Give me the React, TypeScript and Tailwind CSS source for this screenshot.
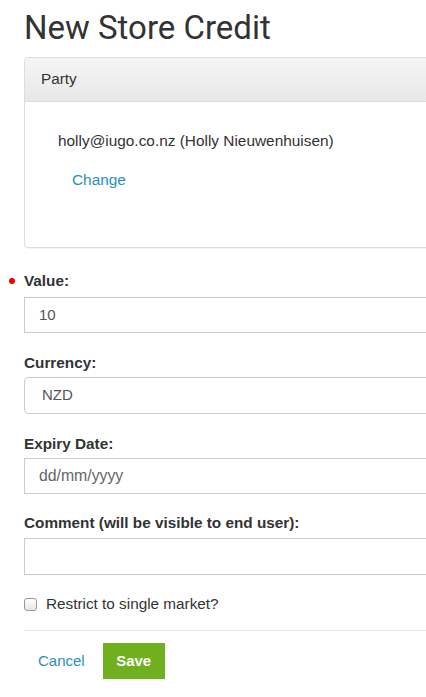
import React from "react";

export default function App() {
  return (
    <div className="w-[426px] h-[697px] overflow-hidden bg-white text-[#333] font-['Liberation_Sans',Arial,sans-serif]">
      <div className="w-[520px] pl-6">
        {/* Title */}
        <h1 className="pt-[9px] h-[57px] text-[33px] leading-[38px] font-['Roboto',sans-serif] text-[#333]">
          New Store Credit
        </h1>

        {/* Party panel */}
        <div className="h-[191px] rounded-[4px] border border-[#ddd] shadow-[0_1px_1px_rgba(0,0,0,0.05)]">
          <div className="h-[44px] flex items-center px-4 bg-gradient-to-b from-[#f5f5f5] to-[#e8e8e8] border-b border-[#ddd] rounded-t-[4px] text-[15.3px]">
            Party
          </div>
          <div className="pl-[33px] pt-[29px] text-[15.4px]">
            <div className="leading-[20px]">holly@iugo.co.nz (Holly Nieuwenhuisen)</div>
            <div className="pl-[14px] pt-[19px] leading-[20px] text-[#2a8fc0]">Change</div>
          </div>
        </div>

        {/* Fields */}
        <div className="pt-[23px] text-[15.3px]">
          <div className="relative h-[20px] flex items-center font-bold">
            <span className="absolute -left-[15px] top-[7px] w-[6px] h-[6px] rounded-full bg-[#e00]" />
            Value:
          </div>
          <div className="mt-[6px] h-[36px] border border-[#ccc] flex items-center pl-[14px] text-[15px] text-[#555]">
            10
          </div>

          <div className="mt-[20px] h-[20px] flex items-center font-bold">Currency:</div>
          <div className="mt-[4px] h-[37px] border border-[#ccc] rounded-[4px] flex items-center pl-[17px] text-[15px] text-[#555]">
            NZD
          </div>

          <div className="mt-[20px] h-[20px] flex items-center font-bold">Expiry Date:</div>
          <div className="mt-[4px] h-[36px] border border-[#ccc] flex items-center pl-[14px] text-[15.8px] text-[#666]">
            dd/mm/yyyy
          </div>

          <div className="mt-[19px] h-[20px] flex items-center font-bold">
            Comment (will be visible to end user):
          </div>
          <div className="mt-[5px] h-[37px] border border-[#ccc]" />

          <div className="mt-[20px] h-[18px] flex items-center gap-[9px]">
            <span className="w-[13px] h-[13px] rounded-[3px] border border-[#999] bg-gradient-to-b from-[#fff] to-[#e6e6e6]" />
            Restrict to single market?
          </div>

          <div className="mt-[17px] border-t border-[#e5e5e5]" />

          <div className="mt-[12px] flex items-center">
            <span className="ml-[14px] text-[15px] text-[#2a8fc0]">Cancel</span>
            <button className="ml-[18px] w-[62px] h-[36px] bg-[#70b01f] text-white font-bold text-[15px]">
              Save
            </button>
          </div>
        </div>
      </div>
    </div>
  );
}
